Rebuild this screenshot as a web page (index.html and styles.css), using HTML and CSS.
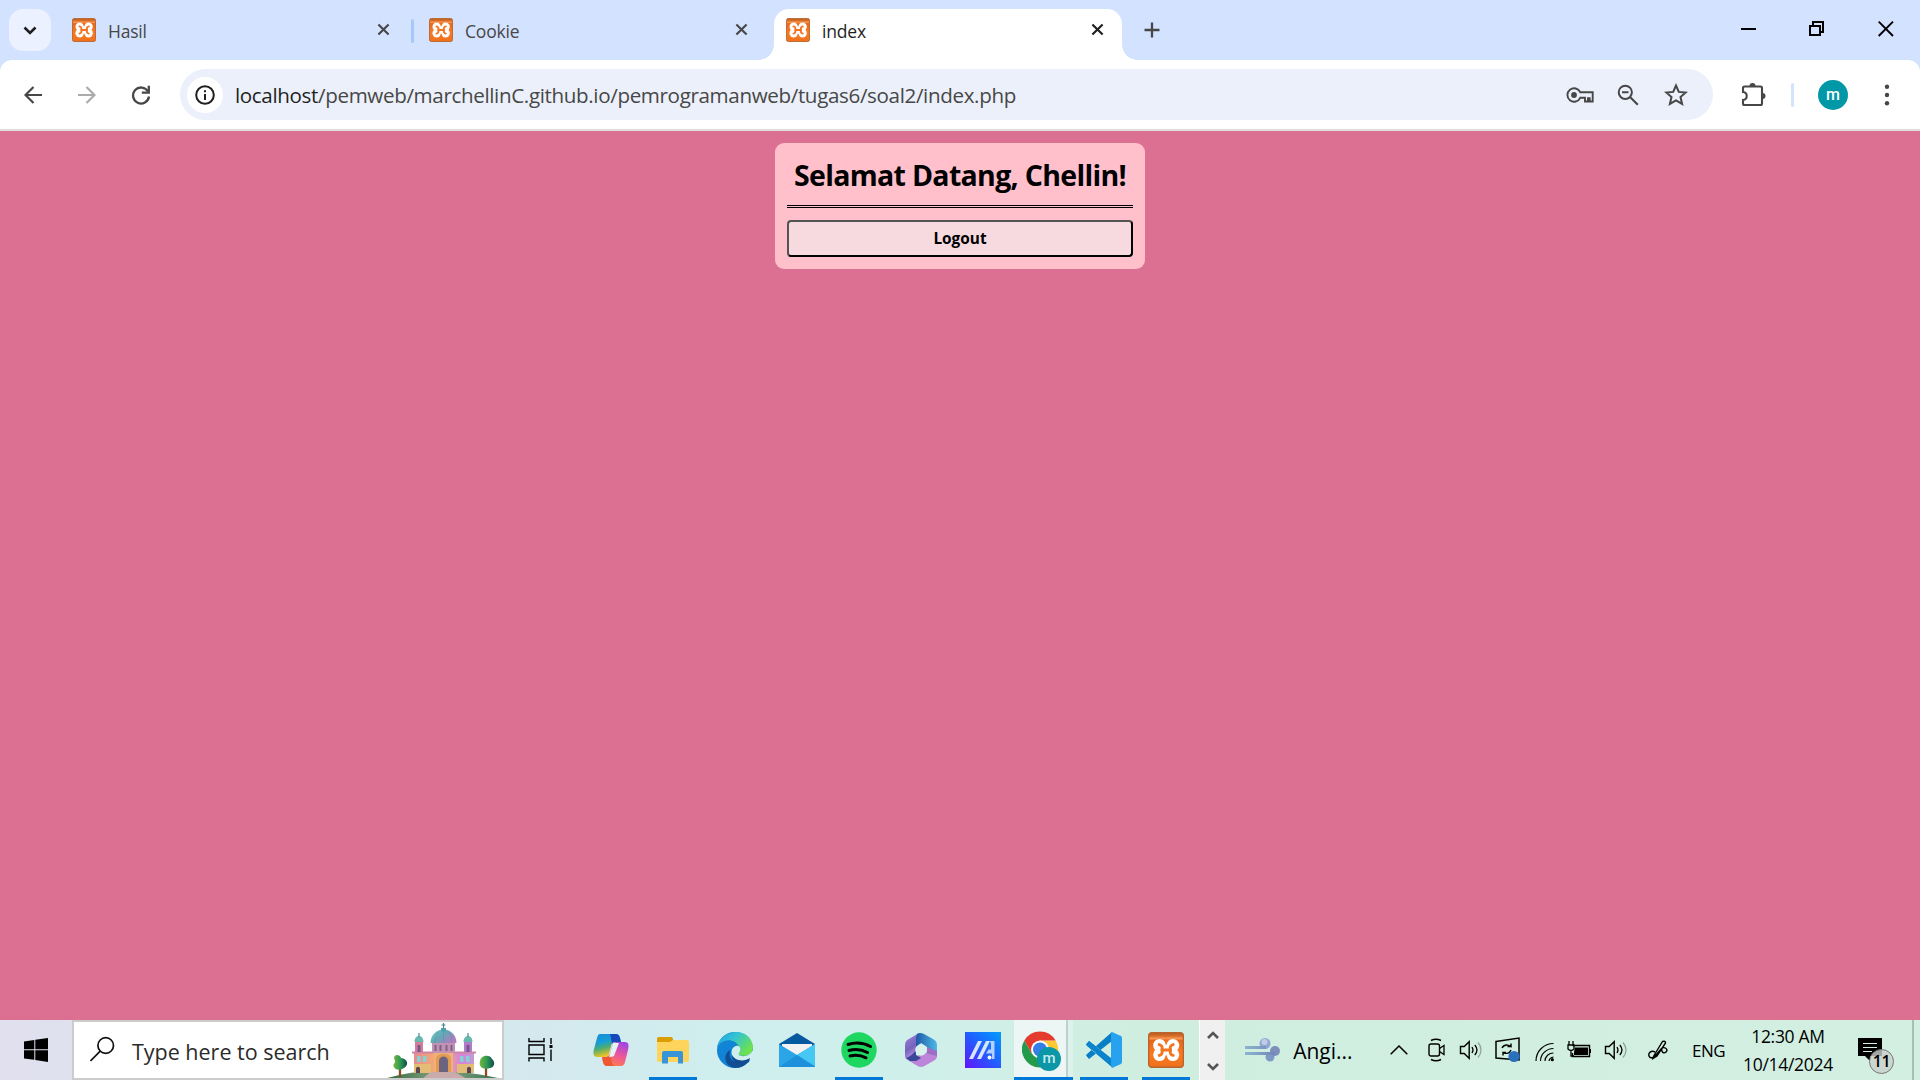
FILE: index.html
```html
<!DOCTYPE html>
<html lang="id">
<head>
<meta charset="utf-8">
<title>index</title>
<link rel="stylesheet" href="styles.css">
</head>
<body>
<svg class="defs" width="0" height="0">
  <defs>
    <linearGradient id="xo" x1="0" y1="0" x2="0" y2="1"><stop offset="0" stop-color="#b85a17"/><stop offset=".1" stop-color="#d9702c"/><stop offset=".17" stop-color="#fb9a55"/><stop offset=".22" stop-color="#e8681a"/><stop offset=".6" stop-color="#f97a22"/><stop offset="1" stop-color="#f0711c"/></linearGradient>
    <symbol id="xampp" viewBox="0 0 36 36">
      <rect x=".7" y=".7" width="34.6" height="34.6" rx="3" fill="url(#xo)" stroke="#b9642c" stroke-width="1.4"/>
      <g fill="#fff"><circle cx="11.500" cy="13.200" r="6.300"/><circle cx="24.900" cy="13.200" r="6.300"/><circle cx="11.500" cy="22.800" r="6.300"/><circle cx="24.900" cy="22.800" r="6.300"/><path d="M7.500 14h21.400v8H7.500zM13 11h10.400v14H13z"/></g>
      <path d="M11.200 12.600q4 1 2.600 5.400q1.400 4.400-2.600 5.400M25.200 12.600q-4 1-2.600 5.400q-1.400 4.400 2.600 5.400M13.800 18h8.800" fill="none" stroke="#f47521" stroke-width="2.900" stroke-linecap="round"/>
      <path d="M18.200 6.500v6M18.200 23.500v6" stroke="#f47521" stroke-width="1.700"/>
    </symbol>
    <symbol id="x" viewBox="0 0 14 14"><path d="M1.500 1.500l11 11M12.500 1.500l-11 11" fill="none" stroke="currentColor" stroke-width="2.300"/></symbol>
    <symbol id="speaker" viewBox="0 0 24 24">
      <path d="M1.500 8.500h3.700l5-4.800v16.600l-5-4.800H1.500z" fill="none" stroke="#000" stroke-width="1.400"/>
      <path d="M13 9c1.300 2 1.300 4 0 6M15.800 7c2.600 3 2.600 7 0 10" fill="none" stroke="#000" stroke-width="1.300"/>
      <path d="M19 4.500c4 4.500 4 10.500 0 15" fill="none" stroke="#8fa59b" stroke-width="1.300"/>
    </symbol>
  </defs>
</svg>

<header class="tabs">
  <div class="tab-search"><svg width="14" height="9" viewBox="0 0 14 9"><path d="M1.500 1.500L7 7l5.500-5.500" fill="none" stroke="#1f1f1f" stroke-width="2.600"/></svg></div>
  <div class="tab first"><svg class="fav"><use href="#xampp"/></svg><span class="title">Hasil</span><svg class="close"><use href="#x"/></svg></div>
  <i class="tab-sep"></i>
  <div class="tab second"><svg class="fav"><use href="#xampp"/></svg><span class="title">Cookie</span><svg class="close"><use href="#x"/></svg></div>
  <div class="tab active"><svg class="fav"><use href="#xampp"/></svg><span class="title">index</span><svg class="close"><use href="#x"/></svg></div>
  <svg class="plus" width="16" height="16" viewBox="0 0 16 16"><path d="M8 .5v15M.5 8h15" stroke="#474747" stroke-width="2.300"/></svg>
  <div class="window-controls">
    <svg width="16" height="16" viewBox="0 0 16 16"><path d="M1 8h15" stroke="#000" stroke-width="2"/></svg>
    <svg width="16" height="16" viewBox="0 0 16 16"><path d="M1 5h10v9H1zM4 4V1h10v10h-3" fill="none" stroke="#000" stroke-width="2"/></svg>
    <svg width="16" height="16" viewBox="0 0 16 16"><path d="M.7.7l14.300 14.300M15 .7L.7 15" fill="none" stroke="#000" stroke-width="1.900"/></svg>
  </div>
</header>

<nav class="toolbar">
  <svg class="nav" width="18" height="18" viewBox="0 0 18 18"><path d="M18 9H1.800M9.500 1L1.500 9l8 8" fill="none" stroke="#474747" stroke-width="2.200"/></svg>
  <svg class="nav" width="18" height="18" viewBox="0 0 18 18"><path d="M0 9h16.200M8.500 1l8 8-8 8" fill="none" stroke="#ababab" stroke-width="2.200"/></svg>
  <svg class="nav" width="20" height="20" viewBox="0 0 20 20"><path d="M17 6.500A8 8 0 1 0 18 11.500" fill="none" stroke="#474747" stroke-width="2.300"/><path d="M17.800.8v6.900h-7" fill="none" stroke="#474747" stroke-width="2.300"/></svg>
  <div class="omnibox">
    <span class="info"><svg width="20" height="20" viewBox="0 0 20 20"><circle cx="10" cy="10" r="8.800" fill="none" stroke="#1f1f1f" stroke-width="2"/><path d="M10 9v6M10 5.300v2" stroke="#1f1f1f" stroke-width="2"/></svg></span>
    <span class="url"><b>localhost</b>/pemweb/marchellinC.github.io/pemrogramanweb/tugas6/soal2/index.php</span>
    <svg class="key" width="28" height="16" viewBox="0 0 28 16"><path d="M14.200 5.200A6.700 6.700 0 1 0 14.200 10.800H19v3.700h3v-3.300h1.700v3.300h3V5.200z" fill="none" stroke="#474747" stroke-width="1.900"/><circle cx="8" cy="8" r="2.900" fill="#474747"/></svg>
    <svg class="zoom" width="22" height="22" viewBox="0 0 22 22"><circle cx="8.300" cy="8.300" r="6.600" fill="none" stroke="#474747" stroke-width="2"/><path d="M5 8.300h6.500M13 13l7.800 7.800" stroke="#474747" stroke-width="2.100"/></svg>
    <svg class="star" width="24" height="23" viewBox="0 0 24 23"><path d="M12 2.500l2.800 6.400 6.900.6-5.200 4.600 1.600 6.800L12 17.300l-6.100 3.600 1.600-6.800L2.300 9.500l6.900-.6z" fill="none" stroke="#474747" stroke-width="2"/></svg>
  </div>
  <svg class="ext" width="26" height="26" viewBox="0 0 26 26"><path d="M3.500 4.500q-1.500 0-1.500 1.500v4c5 .5 5 7.500 0 8v3.500q0 1.500 1.500 1.500h16q1.500 0 1.500-1.500V6q0-1.500-1.500-1.500z" fill="none" stroke="#474747" stroke-width="2.100"/><path d="M8.500 4a3 3 0 0 1 6 0zM21.500 11a3 3 0 0 1 0 6z" fill="#474747"/></svg>
  <i class="bar-sep"></i>
  <span class="avatar">m</span>
  <svg class="more" width="6" height="22" viewBox="0 0 6 22"><g fill="#474747"><circle cx="3" cy="2.700" r="2.200"/><circle cx="3" cy="11" r="2.200"/><circle cx="3" cy="19.300" r="2.200"/></g></svg>
</nav>

<main class="page">
  <section class="card">
    <h1><span>Selamat Datang, Chellin!</span></h1>
    <hr>
    <button><span>Logout</span></button>
  </section>
</main>

<footer class="taskbar">
  <div class="start"><svg width="24" height="24" viewBox="0 0 24 24"><path d="M0 3.500L10.300 2v9.300H0zM11.300 1.800L24 0v11.300H11.300zM0 12.300h10.300v9.500L0 20.500zM11.300 12.300H24V24l-12.700-1.900z"/></svg></div>
  <div class="search">
    <svg width="26" height="26" viewBox="0 0 26 26"><circle cx="15.700" cy="9.500" r="7.800" fill="none" stroke="#111" stroke-width="1.700"/><path d="M10.200 15.200L.5 25" stroke="#111" stroke-width="1.700"/></svg>
    <span class="placeholder">Type here to search</span>
    <svg class="palace" width="118" height="56" viewBox="0 0 118 56">
      <defs>
        <linearGradient id="dome" x1="0" x2="1" y2=".6"><stop stop-color="#79cccb"/><stop offset=".5" stop-color="#63a9b5"/><stop offset="1" stop-color="#b47bc0"/></linearGradient>
        <linearGradient id="wall"><stop stop-color="#e88a90"/><stop offset=".38" stop-color="#f6ad70"/><stop offset=".6" stop-color="#dfa3a0"/><stop offset=".78" stop-color="#db80dc"/><stop offset="1" stop-color="#c19bd0"/></linearGradient>
        <linearGradient id="hill"><stop stop-color="#316b3a"/><stop offset=".5" stop-color="#8da68a"/><stop offset="1" stop-color="#2c7049"/></linearGradient>
        <linearGradient id="leaf"><stop stop-color="#75b63d"/><stop offset=".5" stop-color="#2e9a54"/><stop offset="1" stop-color="#12494a"/></linearGradient>
      </defs>
      <path d="M0 57Q28 48 59 49t59 8z" fill="url(#hill)"/>
      <path d="M30 30h60v20H30z" fill="url(#wall)"/>
      <path d="M28 29.500h25v2H28zM66 29.500h26v2H66z" fill="#cf84a6"/>
      <path d="M30 42h17v9H30zM73 42h17v9H73z" fill="#e3bd76"/>
      <path d="M31 20h8v10h-8z" fill="#d57c9a"/><path d="M80 20h8v10h-8z" fill="#b57bcb"/>
      <path d="M33.500 23h3v7h-3zM82.500 23h3v7h-3z" fill="#75598e"/>
      <path d="M30.500 20c0-8 9-8 9 0zM79.500 20c0-8 9-8 9 0z" fill="#68b8ad"/>
      <path d="M35 11v4M84 11v4M59.500 1v8M57.500 3h4" stroke="#488a91" stroke-width="1.200"/>
      <path d="M48 21h23v10H48z" fill="#c391b1"/><path d="M50.500 23h2v6h-2zM55.500 23h2v6h-2zM61.500 23h2v6h-2zM66.500 23h2v6h-2z" fill="#7b648b"/>
      <path d="M46.500 21C47 3 72 3 72.500 21z" fill="url(#dome)"/><path d="M57 9.500h5V6h-5z" fill="#4f9ea8"/>
      <path d="M59.500 9v12M54 10q-3 4-3 11M65 10q3 4 3 11" fill="none" stroke="#4f93a2" stroke-width=".5"/>
      <path d="M50 31h19v20H50z" fill="#f0b078"/><path d="M52 51V37c0-7 15-7 15 0v14z" fill="#e29b55"/><path d="M55 51V39c0-6 9-6 9 0v12z" fill="#6c6380"/>
      <path d="M33 34h3.500v6H33zM39 34h3.500v6H39zM76 34h3.500v6H76zM82 34h3.500v6H82z" fill="#80d3d6"/>
      <path d="M32 51v-4c0-3 4-3 4 0v4zM83 51v-4c0-3 4-3 4 0v4z" fill="#5a4554"/>
      <path d="M47 50h24l12 7H38z" fill="#c9abab"/>
      <path d="M16 42v13M102 42v13" stroke="#8a4a23" stroke-width="2.300"/>
      <path d="M10 36c0-4 6-4 7 0 7 1 8 7 3 10-4 3-9 2-10-1-2-3 2-4 1-6z" fill="url(#leaf)"/>
      <path d="M96 39c1-6 10-7 12-2 4 3 2 9-2 9-5 2-12 0-10-7z" fill="url(#leaf)"/>
    </svg>
  </div>
  <div class="apps">
    <div class="app taskview"><svg width="26" height="24" viewBox="0 0 26 24"><path d="M1 0v3.500h15V0M1 7h15v9.500H1zM1 23.500V20h15v3.500M23 0v6M23 11.500V23" fill="none" stroke="#000" stroke-width="1.400"/><path d="M21.500 7h3v3h-3z"/></svg></div>
    <div class="app"><svg width="36" height="34" viewBox="0 0 36 34">
      <defs><linearGradient id="c1" x2=".3" y2="1"><stop stop-color="#168bd8"/><stop offset=".4" stop-color="#169ed7"/><stop offset=".65" stop-color="#4dad71"/><stop offset="1" stop-color="#f3c51f"/></linearGradient><linearGradient id="c2" x1=".7" x2=".3" y2="1"><stop stop-color="#a244e4"/><stop offset=".5" stop-color="#ec5798"/><stop offset="1" stop-color="#ff8048"/></linearGradient></defs>
      <path d="M7 1h16q3 0 4 4l1 4h-6q-3 0-4 4l-2 8q-1 3-5 3H4c-4 0-4-4-3-8L4 5Q5 1 7 1z" fill="url(#c1)"/><path d="M17 1h6q3 0 4 4l1 4h-6q-2 0-3 2-1-7-2-10z" fill="#1749bd"/>
      <path d="M28 9h4c4 0 4 4 3 8l-3 12q-1 4-4 4H14q-3 0-4-4l-1-5h3q4 0 5-4l2-7q1-4 5-4z" fill="url(#c2)"/><path d="M9 24h4q3 0 4-3l2 8q0 3 3 4h-8q-3 0-4-4z" fill="#ee5832"/><path d="M20 10h6l-5 13q-1 1-5 1z" fill="#e8f2f1"/>
    </svg></div>
    <div class="app open"><svg width="32" height="27" viewBox="0 0 32 27"><path d="M0 2q0-2 2-2h12q2 0 2 3v3H0z" fill="#dc9d00"/><path d="M0 5h13l3-2h14q2 0 2 2v18q0 2-2 2H2q-2 0-2-2z" fill="#ffd45c"/><path d="M5 26.500V16q0-2 2-2h17q2 0 2 2v10.500h-5V20H11v6.500z" fill="#3a94d8"/></svg></div>
    <div class="app"><svg width="36" height="36" viewBox="0 0 36 36">
      <defs><linearGradient id="e1" x2="1" y2=".6"><stop stop-color="#249de0"/><stop offset=".45" stop-color="#31c3d5"/><stop offset="1" stop-color="#6fe34a"/></linearGradient><linearGradient id="e2" x2="1" y2="1"><stop stop-color="#1787d3"/><stop offset="1" stop-color="#087edb"/></linearGradient></defs>
      <circle cx="18" cy="18" r="18" fill="url(#e2)"/><path d="M0 16C3-4 34-6 36 15c0 9-10 10-14 8-4-2 2-3 0-8C18 5 3 7 0 16z" fill="url(#e1)"/>
      <path d="M14 18c-3 4-1 12 6 12 5 0 9-1 13-3-3 6-9 9-15 9C6 34 6 20 14 18z" fill="#124c91"/><path d="M22 23c3 2 10 2 14-5v9c-6 4-16 4-20-2-3-5-1-10 3-11 4-1 5 3 4 5-1 2-2 3-1 4z" fill="#d1eeee"/><path d="M15 23c3 6 12 7 18 3l-1 4c-8 4-18 1-17-7z" fill="#124c91"/>
    </svg></div>
    <div class="app"><svg width="36" height="34" viewBox="0 0 36 34"><path d="M0 11L18 0l18 11v8H0z" fill="#07599f"/><path d="M3 11h30v10L18 30 3 21z" fill="#f2f2f2"/><path d="M0 11l18 11 18-11v23H0z" fill="#2aa5e5"/><path d="M36 11v22L18 22z" fill="#46c8f5"/><path d="M0 34h36L18 22z" fill="#1d91db"/></svg></div>
    <div class="app open"><svg width="36" height="36" viewBox="0 0 36 36"><circle cx="18" cy="18" r="17.700" fill="#1ed760"/><path d="M7 12.500c8-2.500 16-1.500 22.500 2M8 18.500c7-2 13-1 18.500 2M9 24c6-1.500 11-.8 16 1.800" fill="none" stroke="#000" stroke-width="3" stroke-linecap="round"/></svg></div>
    <div class="app"><svg width="32" height="34" viewBox="0 0 32 34">
      <defs><linearGradient id="o1" x2=".4" y2="1"><stop stop-color="#a384dc"/><stop offset=".6" stop-color="#7663bd"/><stop offset="1" stop-color="#c899ef"/></linearGradient><linearGradient id="o2" x2="1"><stop stop-color="#1d5aa6"/><stop offset="1" stop-color="#4eb9e9"/></linearGradient></defs>
      <path d="M14 0L3 6.500Q0 8 0 12v11q0 3 3 4l6-3q2-2 2-5v-5l5-4V1z" fill="url(#o1)"/><path d="M12 1q3-2 7 0l9 5q4 2 4 6v11L22 18v-4l-6-4-5 4v-7q0-4 1-6z" fill="url(#o2)"/><path d="M32 18v4q0 4-3 5l-10 6q-3 1-6 0L3 27l7-4 6 1 6-5V14z" fill="#9b6fc4"/><path d="M3 27q5 0 8-4l10-3 11 3-2 4-11 6q-3 1-6 0z" fill="#bc85d9"/><path d="M1 25q6-2 10-8v5l5 3-5 3H5z" fill="#3a4697"/><circle cx="16" cy="17" r="5.800" fill="#d6f0ea"/>
    </svg></div>
    <div class="app"><svg width="36" height="36" viewBox="0 0 36 36"><defs><linearGradient id="m1" x1="0" y1="1" x2="1" y2="0"><stop stop-color="#6411ff"/><stop offset=".5" stop-color="#225dff"/><stop offset="1" stop-color="#009dfb"/></linearGradient></defs><path d="M0 0h36v36H0z" fill="url(#m1)"/><path d="M4 27L13 9h4L8 27zM12 27L21 9h4l-9 18z" fill="#d7e6ff"/><path d="M25 9h4.500v18h-2.500v-5.500h-6l2.500-4H26V12z" fill="#b3d0ff"/><circle cx="24.500" cy="25.500" r="2" fill="#fff"/></svg></div>
    <div class="app chrome"><svg width="42" height="42" viewBox="0 0 42 42">
      <path d="M18 9.500h15.600A18 18 0 0 1 18 36.500l8-13.500z" fill="#fcc934"/><path d="M2.400 9.500A18 18 0 0 0 18 36.500L26 23 10 23z" fill="#249b4b"/><path d="M2.400 9.500A18 18 0 0 1 33.600 9.500H18L10 23z" fill="#e53b2e"/><circle cx="18" cy="18.500" r="9" fill="#fff"/><circle cx="18" cy="18.500" r="7" fill="#347ee8"/>
    </svg><span class="badge-m">m</span></div>
    <div class="app open vscode"><svg width="36" height="36" viewBox="0 0 36 36"><path d="M0 12.500L3 9l23 18v8L1 14zM0 23.500L3 27 26 9V0L1 22z" fill="#087ec5"/><path d="M0 12.500L3 9l23 18v8z" fill="#0a84cc"/><path d="M26 0l9 4q1 1 1 2v24q0 1-1 2l-9 4q-1-1-1-3V3q0-2 1-3z" fill="#26a2ef"/></svg></div>
    <div class="app open xampp"><svg width="36" height="36"><use href="#xampp"/></svg></div>
  </div>
  <div class="scroller">
    <svg width="12" height="10" viewBox="0 0 12 10"><path d="M1 8l5-5 5 5" fill="none" stroke="#555" stroke-width="2.600"/></svg>
    <svg width="12" height="10" viewBox="0 0 12 10"><path d="M1 2l5 5 5-5" fill="none" stroke="#555" stroke-width="2.600"/></svg>
  </div>
  <div class="weather">
    <svg width="36" height="26" viewBox="0 0 36 26"><defs><linearGradient id="w"><stop stop-color="#8db4ce"/><stop offset="1" stop-color="#7287ba"/></linearGradient></defs><circle cx="20" cy="6.500" r="5.500" fill="#91a8d3"/><circle cx="19.500" cy="5" r="3" fill="#c1cbe7"/><circle cx="25" cy="20" r="4.500" fill="#7f9bc5"/><circle cx="30" cy="14" r="5" fill="#7d90bb"/><path d="M0 9h21v3H0zM0 15h30v3H0z" fill="url(#w)"/></svg>
    <span>Angi...</span>
  </div>
  <div class="tray">
    <svg width="18" height="10" viewBox="0 0 18 10"><path d="M.7 9.300L9 1l8.300 8.300" fill="none" stroke="#000" stroke-width="1.500"/></svg>
    <svg width="18" height="24" viewBox="0 0 18 24"><path d="M3 2.500q5-2.500 10 0M3 21.500q5 2.500 10 0" fill="none" stroke="#000" stroke-width="1.400"/><rect x="1" y="6" width="10.500" height="12" rx="2" fill="none" stroke="#000" stroke-width="1.400"/><path d="M11.500 10.500L16 7.500v9l-4.500-3" fill="none" stroke="#000" stroke-width="1.300"/></svg>
    <svg width="24" height="24"><use href="#speaker"/></svg>
    <svg width="26" height="26" viewBox="0 0 26 26"><path d="M1 4.500L24 1v22L1 21z" fill="none" stroke="#000" stroke-width="1.500"/><path d="M7 11q3-5 9-1.500V6.500M16 9.500h-3.500M16 13q-2 5-8 2.500v3M8 15.500h3" fill="none" stroke="#000" stroke-width="1.400"/><circle cx="19" cy="19.500" r="5.600" fill="#2970bd"/></svg>
    <svg width="20" height="20" viewBox="0 0 20 20"><path d="M1 19C1 9 9 1.500 18.500 1.500M5.500 19c0-7 6-12.500 13-12.500M10 19c0-4.500 4-8 8.500-8M14 19q.5-3.500 4.500-4" fill="none" stroke="#000" stroke-width="1.200"/><circle cx="17.300" cy="17.700" r="1.600"/></svg>
    <svg width="24" height="18" viewBox="0 0 24 18"><path d="M5.500 4.500h17v11h-17V12M23.500 8v4" fill="none" stroke="#000" stroke-width="1.400"/><path d="M8 6.500h13v7.500H7v-3z"/><path d="M1 4h6v4q-3 3-6 0zM2 4V0M6 4V0M4 9.500V15h3" fill="none" stroke="#000" stroke-width="1.300"/></svg>
    <svg width="24" height="24"><use href="#speaker"/></svg>
    <svg width="20" height="20" viewBox="0 0 20 20"><path d="M6 15.500L14.500 1.500q3-1 3 1.500L9 16l-4 2.500zM7 12c-4-2-7 1-6 4s5 2 7-1l5-6c3-3 8 0 5 3-2 2-5 0-4-3" fill="none" stroke="#000" stroke-width="1.400"/></svg>
    <span class="lang">ENG</span>
    <div class="clock"><span class="time">12:30 AM</span><span class="date">10/14/2024</span></div>
    <div class="notice"><svg width="24" height="24" viewBox="0 0 24 24"><path d="M0 0h24v18H12v5l-5-5H0z"/><path d="M5 5.500h14M5 9.500h14M5 13.500h9" stroke="#d5efe2" stroke-width="1"/></svg><span>11</span></div>
  </div>
</footer>
</body>
</html>
```
FILE: styles.css
```css
* { box-sizing: border-box; }
body {
  margin: 0; width: 1920px; height: 1080px; overflow: hidden;
  display: flex; flex-direction: column;
  font-family: "Open Sans", "Noto Sans", sans-serif; color: #000;
  background: #d3e2fe;
}
svg { display: block; flex: none; }
.defs { position: absolute; }
span { white-space: nowrap; }

/* tab strip */
.tabs { height: 60px; flex: none; display: flex; padding: 9px 0 0 9px; }
.tab-search { width: 42px; height: 42px; border-radius: 14px; background: #ebf1fe; display: flex; align-items: center; justify-content: center; }
.tab { height: 51px; flex: none; display: flex; align-items: flex-start; padding: 9px 18px 0 12px; color: #474747; }
.tab.first { width: 351px; margin-left: 9px; padding-right: 21px; }
.tab.second { width: 360px; padding-right: 26px; padding-left: 15px; }
.tab.active { width: 348px; background: #fff; border-radius: 15px 15px 0 0; position: relative; color: #1f1f1f; }
.tab.active::before, .tab.active::after {
  content: ""; position: absolute; bottom: 0; width: 15px; height: 15px;
}
.tab.active::before { left: -15px; background: radial-gradient(circle at 0 0, transparent 14.500px, #fff 15px); }
.tab.active::after { right: -15px; background: radial-gradient(circle at 100% 0, transparent 14.500px, #fff 15px); }
.fav { width: 24px; height: 24px; }
.title { font-size: 17.500px; line-height: 27px; margin-left: 12px; letter-spacing: -.2px; }
.close { width: 13px; height: 13px; margin: 5px 0 0 auto; }
.tab-sep { width: 3px; height: 24px; margin-top: 10px; background: #a8c7fa; border-radius: 2px; }
.plus { margin: 13px 0 0 22px; }
.window-controls { display: flex; gap: 53px; margin: 12px 26px 0 auto; }

/* toolbar */
.toolbar { height: 71px; flex: none; display: flex; align-items: center; background: #fff; border-bottom: 2px solid #dedede; border-radius: 12px 12px 0 0; padding-left: 24px; }
.nav { margin-right: 36px; }
.nav + .nav { margin-right: 35px; }
.nav + .nav + .nav { margin-right: 29px; }
.omnibox { width: 1533px; height: 51px; border-radius: 26px; background: #ebf0fa; display: flex; align-items: center; padding-left: 7px; }
.info { width: 36px; height: 36px; flex: none; border-radius: 50%; background: #fff; display: flex; align-items: center; justify-content: center; }
.url { width: 1343px; flex: none; padding-left: 12px; font-size: 20.600px; line-height: 30px; letter-spacing: -.36px; color: #474747; }
.url b { font-weight: 400; color: #1f1f1f; }
.zoom { margin-left: 23px; }
.star { margin-left: 25px; }
.ext { margin-left: 28px; }
.bar-sep { width: 3px; height: 24px; margin-left: 24px; background: #d3e3fd; border-radius: 2px; }
.avatar { width: 30px; height: 30px; margin-left: 24px; border-radius: 50%; background: #0097a7; color: #fff; font: 500 16px/29px Roboto, sans-serif; text-align: center; }
.more { margin-left: 36px; }

/* document */
.page { height: 889px; flex: none; background: #db7093; display: flex; justify-content: center; align-items: flex-start; padding-top: 12px; }
.card { width: 370px; height: 126px; padding: 12px; border-radius: 9px; background: #ffc0cb; display: flex; flex-direction: column; }
h1 { margin: 0; height: 50px; font-size: 28.500px; line-height: 40px; font-weight: 700; letter-spacing: -.68px; text-align: center; }
hr { width: 100%; margin: 0 0 12px; border: solid #000; border-width: 1px 0; height: 3px; flex: none; }
button { width: 100%; height: 37px; padding: 0; border: 2px outset #000; border-radius: 4px; background: #f7dadf; font: 700 15.400px/34px "Open Sans", "Noto Sans", sans-serif; color: #000; }

/* taskbar */
.taskbar { height: 60px; flex: none; display: flex; background: linear-gradient(90deg, #e1e0ee 0, #dfe1ee 72px, #d5e8ee 504px, #ceefee 760px, #d0efe8 980px, #d0eee0 1130px, #d2efe1 1920px); }
.start { width: 72px; display: flex; align-items: center; justify-content: center; }
.search { width: 432px; background: #fff; border: 2px solid #ccc; display: flex; align-items: center; padding-left: 16px; }
.search > svg:first-child { margin-top: -2px; }
.placeholder { width: 254px; margin-left: 16px; padding-top: 3px; font-size: 21.500px; line-height: 30px; color: #2b2b2b; }
.apps { width: 696px; display: flex; gap: 14px; }
.app { width: 48px; height: 60px; flex: none; display: flex; align-items: center; justify-content: center; border-bottom: 3px solid transparent; padding-top: 3px; }
.app.open { border-bottom-color: #0078d7; }
.taskview { width: 69px; padding: 2px 0 0 5px; }
.chrome { position: relative; width: 59px; margin: 0 -6px 0 -7px; padding-right: 4px; background: linear-gradient(90deg, #ecf7f5 52px, #bcd3cd 52px, #bcd3cd 54px, #dcf2ea 54px); border-bottom-color: #0078d7; }
.chrome svg { margin: 4px 0 0 3px; }
.badge-m { position: absolute; left: 23px; top: 27px; width: 24px; height: 24px; border-radius: 50%; background: #0b97a5; color: #c8ebed; font: 500 15px/23px Roboto, sans-serif; text-align: center; }
.vscode, .xampp { position: relative; left: -1px; }
.scroller { width: 26px; background: #f0f0f0; border-left: 1px solid #fff; display: flex; flex-direction: column; justify-content: space-between; align-items: center; padding: 10px 0 8px; }
.weather { width: 165px; display: flex; align-items: center; padding-left: 20px; }
.weather span { margin-left: 12px; padding-top: 2px; font-size: 21px; }
.tray { flex: 1; display: flex; align-items: center; }
.tray > svg:nth-child(2) { margin-left: 20px; }
.tray > svg:nth-child(3) { margin-left: 13px; }
.tray > svg:nth-child(4) { margin-left: 12px; }
.tray > svg:nth-child(5) { margin: 3px 0 0 14px; }
.tray > svg:nth-child(6) { margin-left: 12px; }
.tray > svg:nth-child(7) { margin-left: 13px; }
.tray > svg:nth-child(8) { margin-left: 20px; }
.lang { width: 49px; margin-left: 24px; font-size: 17px; letter-spacing: -.5px; }
.clock { width: 94px; display: flex; flex-direction: column; align-items: center; font-size: 17.500px; line-height: 28px; letter-spacing: -.3px; }
.notice { position: relative; width: 78px; height: 60px; margin: 0 7px 0 auto; padding: 18px 0 0 23px; }
.notice::after { content: ""; position: absolute; left: 77px; top: 0; width: 2px; height: 60px; background: #a8c0b4; }
.notice span { position: absolute; left: 34px; top: 29px; width: 25px; height: 25px; border: 1px solid #777; border-radius: 50%; background: #cbd0cdcc; font-size: 16px; line-height: 23px; font-weight: 600; text-align: center; letter-spacing: -.5px; }
```
